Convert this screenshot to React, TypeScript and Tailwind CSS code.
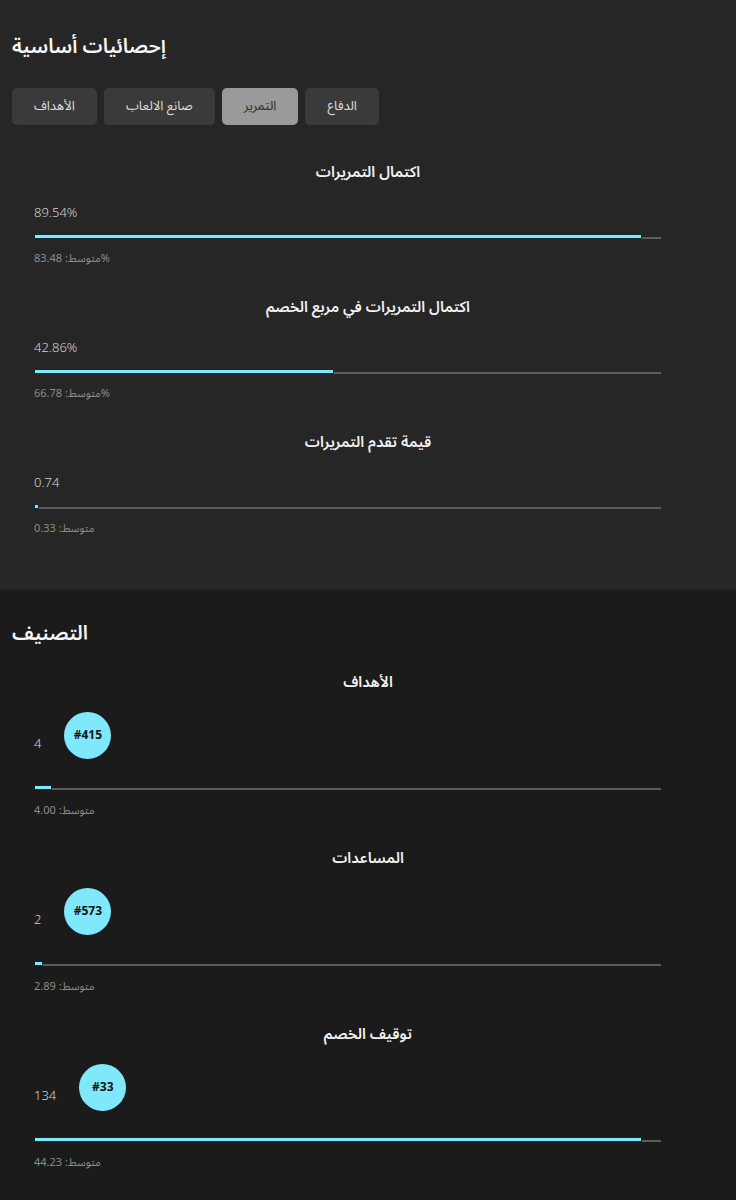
import React from "react";

// stats page: basic stats (tabs + bars) and ranking section
const FONT = "font-['Noto_Sans_Arabic','Noto_Sans','Lato','DejaVu_Sans',sans-serif]";

const tabs = ["الأهداف", "صانع الالعاب", "التمرير", "الدفاع"];
const activeTab = "التمرير";

const passing = [
  { title: "اكتمال التمريرات", value: "89.54%", avg: "متوسط: 83.48%", fill: 608 },
  { title: "اكتمال التمريرات في مربع الخصم", value: "42.86%", avg: "متوسط: 66.78%", fill: 300 },
  { title: "قيمة تقدم التمريرات", value: "0.74", avg: "متوسط: 0.33", fill: 5 },
];

const ranking = [
  { title: "الأهداف", value: "4", rank: "#415", avg: "متوسط: 4.00", fill: 18 },
  { title: "المساعدات", value: "2", rank: "#573", avg: "متوسط: 2.89", fill: 9 },
  { title: "توقيف الخصم", value: "134", rank: "#33", avg: "متوسط: 44.23", fill: 608 },
];

const Bar = ({ fill }: { fill: number }) => (
  <div className="flex items-end w-[627px] h-[5px]">
    <div
      className="h-[5px] bg-[#7fe8fb] border border-[#0c2a33] rounded-[1px] shrink-0"
      style={{ width: fill }}
    />
    <div className="flex-1 h-[2px] bg-[#5c5c5c]" />
  </div>
);

const StatBlock = ({ title, value, avg, fill }: { title: string; value: string; avg: string; fill: number }) => (
  <div className="mb-[28px]">
    <h3 className="text-center text-[15px] leading-6 font-semibold text-[#f2f2f2]">{title}</h3>
    <div className="pl-[22px]">
      <p className="mt-[19px] text-[13px] leading-5 font-light text-[#d2d2d2]">{value}</p>
      <div className="mt-[11px]">
        <Bar fill={fill} />
      </div>
      <p className="mt-[12px] text-[11px] leading-4 text-[#8c8c8c]">{avg}</p>
    </div>
  </div>
);

const RankBlock = ({ title, value, rank, avg, fill }: { title: string; value: string; rank: string; avg: string; fill: number }) => (
  <div className="mb-[27px]">
    <h3 className="text-center text-[15px] leading-6 font-semibold text-[#f2f2f2]">{title}</h3>
    <div className="pl-[22px]">
      <div className="mt-[18px] flex items-start gap-[23px]">
        <p className="mt-[22px] text-[13px] leading-5 font-light text-[#d2d2d2]">{value}</p>
        <div className="w-[47px] h-[47px] rounded-full bg-[#7fe8fb] flex items-center justify-center text-[12px] font-bold text-[#141414]">
          {rank}
        </div>
      </div>
      <div className="mt-[26px]">
        <Bar fill={fill} />
      </div>
      <p className="mt-[13px] text-[11px] leading-4 text-[#8c8c8c]">{avg}</p>
    </div>
  </div>
);

export default function App() {
  return (
    <div className={`${FONT} min-h-screen flex flex-col bg-[#1b1b1b]`}>
      <section className="bg-[#262626] px-[12px] pt-[32px] pb-[25px]">
        <h2 className="text-[20px] leading-[30px] font-semibold text-[#f5f5f5]">إحصائيات أساسية</h2>
        <div className="mt-[26px] mb-[35px] flex gap-[7px]">
          {tabs.map((t) => (
            <button
              key={t}
              className={
                t === activeTab
                  ? "h-[37px] px-[22px] rounded-[5px] bg-[#9a9a9a] text-[13px] text-[#2e2e2e]"
                  : "h-[37px] px-[22px] rounded-[5px] bg-[#3a3a3a] text-[13px] text-[#dcdcdc]"
              }
            >
              {t}
            </button>
          ))}
        </div>
        {passing.map((s) => (
          <StatBlock key={s.title} {...s} />
        ))}
      </section>
      <section className="flex-1 bg-[#1b1b1b] px-[12px] pt-[29px]">
        <h2 className="text-[20px] leading-[30px] font-semibold text-[#f5f5f5]">التصنيف</h2>
        <div className="mt-[21px]">
          {ranking.map((r) => (
            <RankBlock key={r.title} {...r} />
          ))}
        </div>
      </section>
    </div>
  );
}
